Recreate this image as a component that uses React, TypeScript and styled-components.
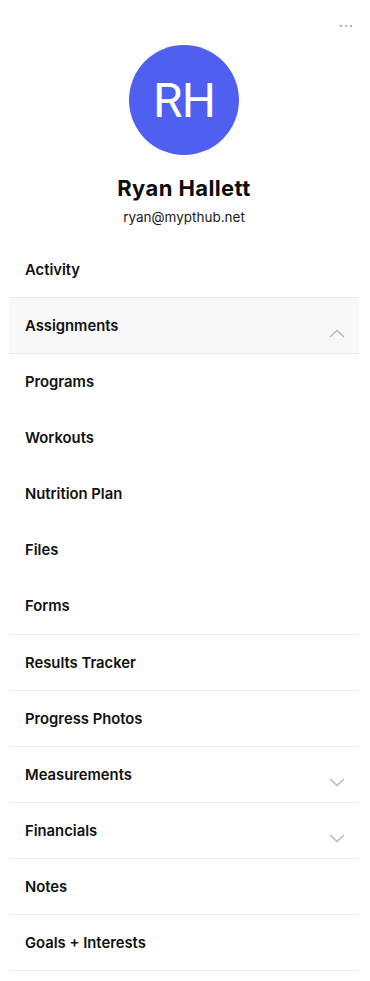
import React from 'react';
import styled, { createGlobalStyle } from 'styled-components';

const GlobalStyle = createGlobalStyle`
  body {
    margin: 0;
    background: #ffffff;
    font-family: Inter, "Noto Sans", Arial, sans-serif;
    color: #111111;
  }
`;

type MenuItem = {
  label: string;
  chevron?: 'up' | 'down';
  active?: boolean;
  children?: string[];
};

const menu: MenuItem[] = [
  { label: 'Activity' },
  {
    label: 'Assignments',
    chevron: 'up',
    active: true,
    children: ['Programs', 'Workouts', 'Nutrition Plan', 'Files', 'Forms'],
  },
  { label: 'Results Tracker' },
  { label: 'Progress Photos' },
  { label: 'Measurements', chevron: 'down' },
  { label: 'Financials', chevron: 'down' },
  { label: 'Notes' },
  { label: 'Goals + Interests' },
];

const Chevron = ({ dir }: { dir: 'up' | 'down' }) => (
  <ChevronIcon width="16" height="9" viewBox="0 0 16 9" fill="none">
    {dir === 'up' ? (
      <path d="M1 8 L8 1.5 L15 8" stroke="#b5b5b5" strokeWidth="1.3" />
    ) : (
      <path d="M1 1 L8 7.5 L15 1" stroke="#b5b5b5" strokeWidth="1.3" />
    )}
  </ChevronIcon>
);

const App = () => {
  return (
    <>
      <GlobalStyle />
      <Page>
        <TopBar>
          <MoreButton aria-label="more">
            <Dot />
            <Dot />
            <Dot />
          </MoreButton>
        </TopBar>

        <Profile>
          <Avatar>RH</Avatar>
          <Name>Ryan Hallett</Name>
          <Email>ryan@mypthub.net</Email>
        </Profile>

        <Menu>
          {menu.map((item) => (
            <Group key={item.label}>
              <Row active={item.active}>
                <Label>{item.label}</Label>
                {item.chevron && <Chevron dir={item.chevron} />}
              </Row>
              {item.children && (
                <SubList>
                  {item.children.map((child) => (
                    <SubRow key={child}>
                      <Label>{child}</Label>
                    </SubRow>
                  ))}
                </SubList>
              )}
            </Group>
          ))}
        </Menu>
      </Page>
    </>
  );
};

const Page = styled.div`
  width: 370px;
  padding: 0 11px 0 9px;
  box-sizing: border-box;
`;

const TopBar = styled.div`
  display: flex;
  justify-content: flex-end;
  height: 45px;
  padding-top: 19px;
  box-sizing: border-box;
`;

const MoreButton = styled.div`
  display: flex;
  gap: 3px;
  height: 14px;
  align-items: center;
  margin-right: 7px;
`;

const Dot = styled.span`
  width: 2px;
  height: 2px;
  background: #b0b0b0;
`;

const Profile = styled.div`
  display: flex;
  flex-direction: column;
  align-items: center;
`;

const Avatar = styled.div`
  width: 110px;
  height: 110px;
  border-radius: 50%;
  background: #4f5fef;
  color: #ffffff;
  display: flex;
  align-items: center;
  justify-content: center;
  font-size: 48px;
  font-weight: 400;
  letter-spacing: -1px;
  font-family: Roboto, "Noto Sans", sans-serif;
`;

const Name = styled.div`
  margin-top: 18px;
  font-size: 22px;
  font-weight: 700;
  line-height: 30px;
  letter-spacing: 0.4px;
  color: #0d0d0d;
`;

const Email = styled.div`
  margin-top: 4px;
  font-size: 13.5px;
  line-height: 20px;
  color: #1a1a1a;
`;

const Menu = styled.div`
  margin-top: 15px;
  display: flex;
  flex-direction: column;
`;

const Group = styled.div`
  display: flex;
  flex-direction: column;
`;

const Row = styled.div<{ active?: boolean }>`
  height: 56px;
  box-sizing: border-box;
  display: flex;
  align-items: center;
  justify-content: space-between;
  padding: 0 14px 0 16px;
  border-bottom: 1px solid #ebebeb;
  background: ${(p) => (p.active ? '#f8f8f8' : '#ffffff')};
`;

const SubList = styled.div`
  display: flex;
  flex-direction: column;
  border-bottom: 1px solid #ebebeb;
`;

const SubRow = styled.div`
  height: 56px;
  display: flex;
  align-items: center;
  padding: 0 16px;
`;

const Label = styled.span`
  font-size: 14.8px;
  font-weight: 600;
  color: #111111;
`;

const ChevronIcon = styled.svg`
  margin-top: 16px;
`;

export default App;
